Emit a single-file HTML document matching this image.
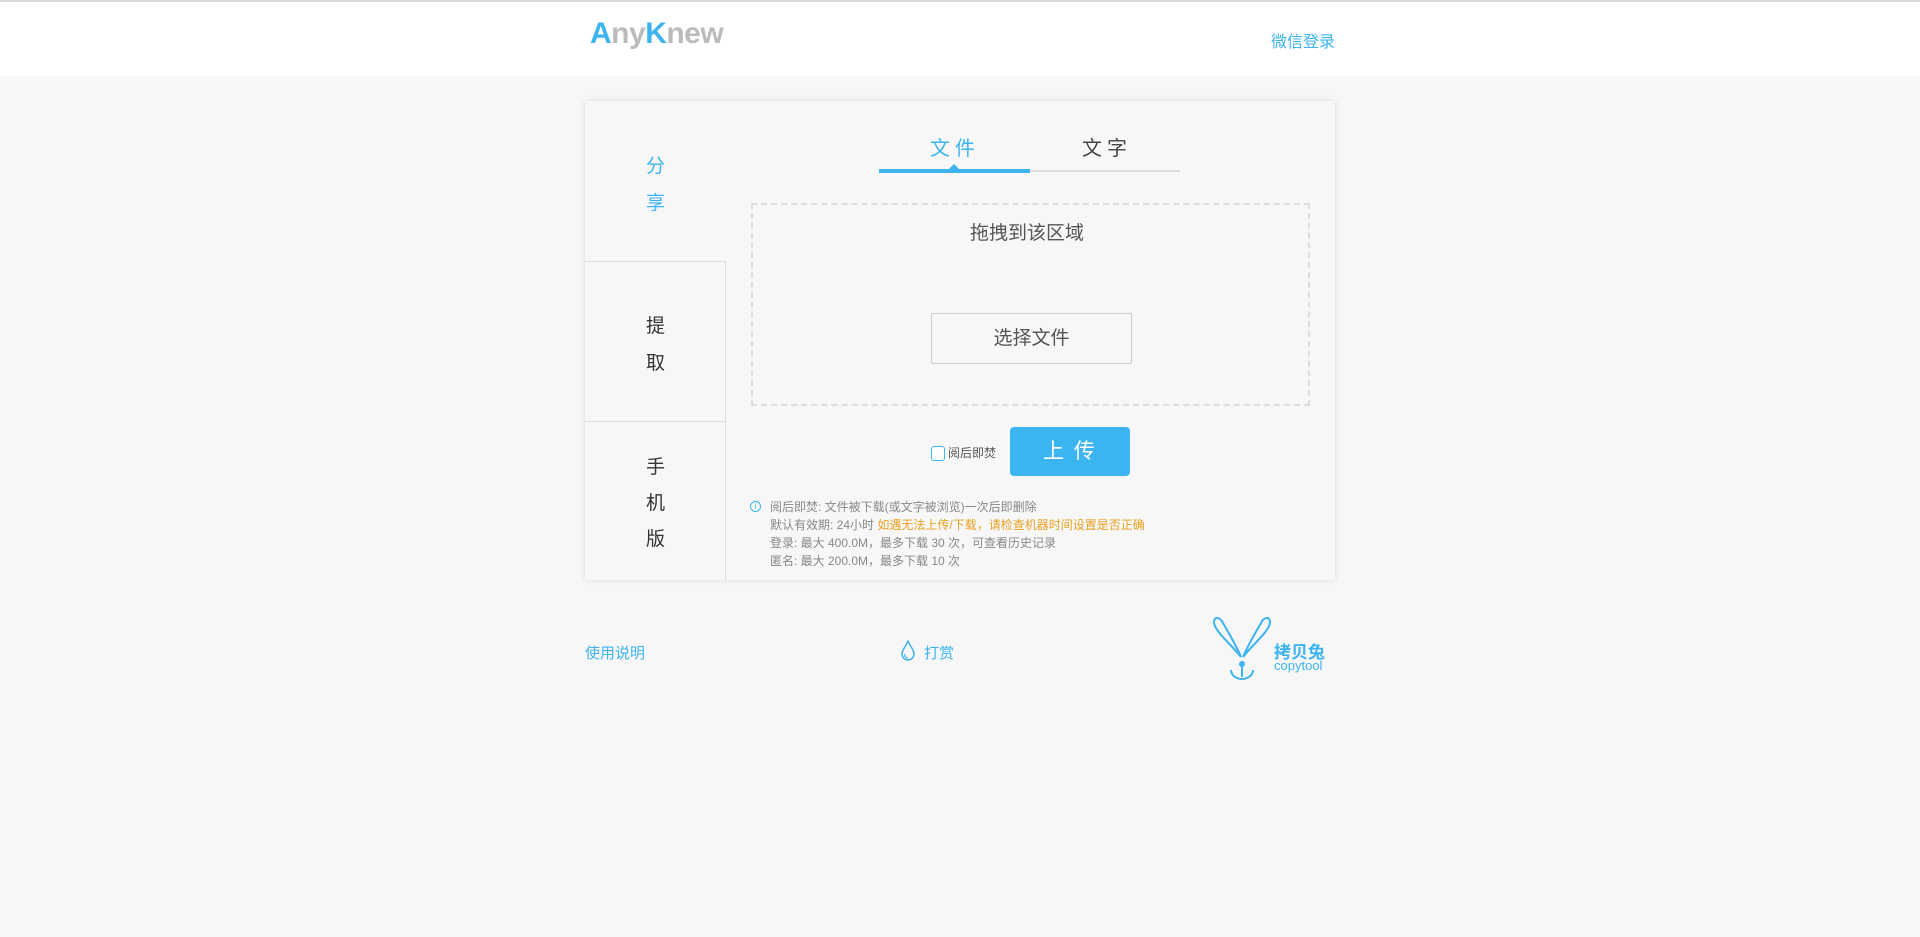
<!DOCTYPE html>
<html><head><meta charset="utf-8"><style>
*{margin:0;padding:0;box-sizing:border-box}
body{width:1920px;height:937px;background:#f7f7f7;font-family:"Liberation Sans","Noto Sans CJK SC",sans-serif;position:relative;overflow:hidden}
.a{position:absolute;white-space:nowrap}
.blue{color:#3cb4f0}
</style></head><body>
<div class="a" style="left:0;top:0;width:1920px;height:76px;background:#fff;border-top:2px solid #d8d8d8"></div>
<div class="a" style="left:590px;top:17px;font-size:30px;font-weight:bold;color:#bbb;letter-spacing:-0.5px"><span class="blue">A</span>ny<span class="blue">K</span>new</div>
<div class="a blue" style="left:1271px;top:28px;font-size:16px">微信登录</div>

<div class="a" style="left:585px;top:101px;width:750px;height:479px;background:#f7f7f7;box-shadow:0 0 6px rgba(0,0,0,0.12)"></div>
<div class="a" style="left:585px;top:261px;width:141px;height:319px;border-right:1px solid #ddd;border-top:1px solid #ddd"></div>
<div class="a" style="left:585px;top:421px;width:141px;height:1px;background:#ddd"></div>
<div class="a blue" style="left:646px;top:148px;font-size:19px;line-height:37px;width:20px;white-space:normal">分 享</div>
<div class="a" style="left:646px;top:308px;font-size:19px;line-height:37px;width:20px;white-space:normal;color:#333">提 取</div>
<div class="a" style="left:646px;top:450px;font-size:19px;line-height:36px;width:20px;white-space:normal;color:#333">手 机 版</div>

<div class="a blue" style="left:930px;top:132px;font-size:20px;letter-spacing:5px">文件</div>
<div class="a" style="left:1082px;top:132px;font-size:20px;letter-spacing:5px;color:#444">文字</div>
<div class="a" style="left:879px;top:170px;width:301px;height:2px;background:#ddd"></div>
<div class="a" style="left:879px;top:169px;width:151px;height:4px;background:#3cb4f0"></div>
<div class="a" style="left:948px;top:164px;width:0;height:0;border-left:6px solid transparent;border-right:6px solid transparent;border-bottom:6px solid #3cb4f0"></div>

<div class="a" style="left:751px;top:203px;width:559px;height:203px;border:2px dashed #ddd"></div>
<div class="a" style="left:970px;top:218px;font-size:19px;color:#555">拖拽到该区域</div>
<div class="a" style="left:931px;top:313px;width:201px;height:51px;border:1px solid #ccc;border-radius:2px;font-size:19px;color:#555;text-align:center;line-height:49px">选择文件</div>

<div class="a" style="left:931px;top:446px;width:14px;height:15px;border:1px solid #3cb4f0;border-radius:3px;background:#fff"></div>
<div class="a" style="left:948px;top:444px;font-size:12px;color:#555">阅后即焚</div>
<div class="a" style="left:1010px;top:427px;width:120px;height:49px;background:#3cb4f0;border-radius:4px;color:#fff;font-size:21px;text-align:center;line-height:49px;letter-spacing:2px">上 传</div>

<div class="a" style="left:750px;top:501px;width:11px;height:11px;border:1px solid #3cb4f0;border-radius:50%;font-size:8px;line-height:9px;text-align:center;color:#3cb4f0">i</div>
<div class="a" style="left:770px;top:498px;font-size:12px;color:#888;line-height:18px">阅后即焚: 文件被下载(或文字被浏览)一次后即删除<br>默认有效期: 24小时 <span style="color:#e8a020">如遇无法上传/下载，请检查机器时间设置是否正确</span><br>登录: 最大 400.0M，最多下载 30 次，可查看历史记录<br>匿名: 最大 200.0M，最多下载 10 次</div>

<div class="a blue" style="left:585px;top:642px;font-size:15px">使用说明</div>
<svg class="a" style="left:901px;top:640px" width="14" height="22" viewBox="0 0 14 22"><path d="M7 1 C5 6 1 10 1 14 A6 6 0 0 0 13 14 C13 10 9 6 7 1Z" fill="none" stroke="#3cb4f0" stroke-width="1.5"/><path d="M4 14 A3 3 0 0 0 7 18" fill="none" stroke="#3cb4f0" stroke-width="1.2"/></svg>
<div class="a blue" style="left:924px;top:642px;font-size:15px">打赏</div>
<svg class="a" style="left:1210px;top:615px" width="66" height="68" viewBox="0 0 66 68"><g fill="none" stroke="#3cb4f0" stroke-width="2"><path d="M31 42 C22 30 4 16 4 7 C4 1 10 2 13 8 C20 20 27 32 31 42Z"/><path d="M33 42 C42 30 60 16 60 7 C60 1 54 2 51 8 C44 20 37 32 33 42Z"/><path d="M32 50 V62"/><path d="M21 55 A11 9 0 0 0 43 55"/></g><circle cx="32" cy="49" r="3" fill="#3cb4f0"/></svg>
<div class="a blue" style="left:1274px;top:638px;font-size:17px;font-weight:bold">拷贝兔</div>
<div class="a blue" style="left:1274px;top:658px;font-size:13px">copytool</div>
</body></html>
